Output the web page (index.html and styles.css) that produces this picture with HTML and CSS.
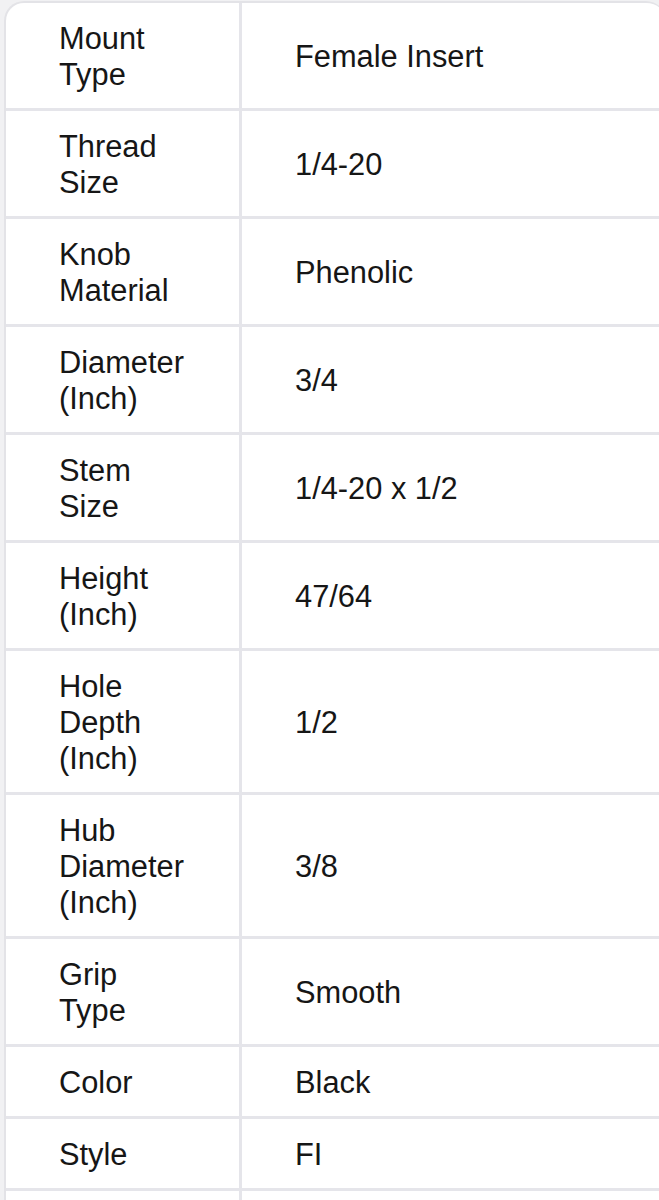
FILE: index.html
```html
<!DOCTYPE html>
<html lang="en">
<head>
<meta charset="utf-8">
<title>Specifications</title>
<link rel="stylesheet" href="styles.css">
</head>
<body>
<div class="specs">
  <div class="row"><div class="key">Mount<br>Type</div><div class="val">Female Insert</div></div>
  <div class="row"><div class="key">Thread<br>Size</div><div class="val">1/4-20</div></div>
  <div class="row"><div class="key">Knob<br>Material</div><div class="val">Phenolic</div></div>
  <div class="row"><div class="key">Diameter<br>(Inch)</div><div class="val">3/4</div></div>
  <div class="row"><div class="key">Stem<br>Size</div><div class="val">1/4-20 x 1/2</div></div>
  <div class="row"><div class="key">Height<br>(Inch)</div><div class="val">47/64</div></div>
  <div class="row"><div class="key">Hole<br>Depth<br>(Inch)</div><div class="val">1/2</div></div>
  <div class="row"><div class="key">Hub<br>Diameter<br>(Inch)</div><div class="val">3/8</div></div>
  <div class="row"><div class="key">Grip<br>Type</div><div class="val">Smooth</div></div>
  <div class="row"><div class="key">Color</div><div class="val">Black</div></div>
  <div class="row"><div class="key">Style</div><div class="val">FI</div></div>
  <div class="row"><div class="key">&nbsp;</div><div class="val">&nbsp;</div></div>
</div>
</body>
</html>
```
FILE: styles.css
```css
html, body {
  margin: 0;
  background: #f1f1f3;
}
body {
  padding: 1px 0 0 4px;
  overflow: hidden;
  height: 1200px;
  box-sizing: border-box;
}
.specs {
  width: 660px;
  background: #ffffff;
  border-left: 2px solid #e3e3e7;
  border-top: 2px solid #e3e3e7;
  border-radius: 20px 20px 0 0;
  overflow: hidden;
  font-family: "Liberation Sans", Arial, sans-serif;
  font-size: 30.8px;
  line-height: 36px;
  color: #161616;
}
.row {
  display: grid;
  grid-template-columns: 236px 1fr;
  border-bottom: 3px solid #e5e5ea;
}
.key, .val {
  padding: 18px 0 15px 53px;
  display: flex;
  flex-direction: column;
  justify-content: center;
}
.key {
  display: block;
  border-right: 3px solid #e5e5ea;
}
```
